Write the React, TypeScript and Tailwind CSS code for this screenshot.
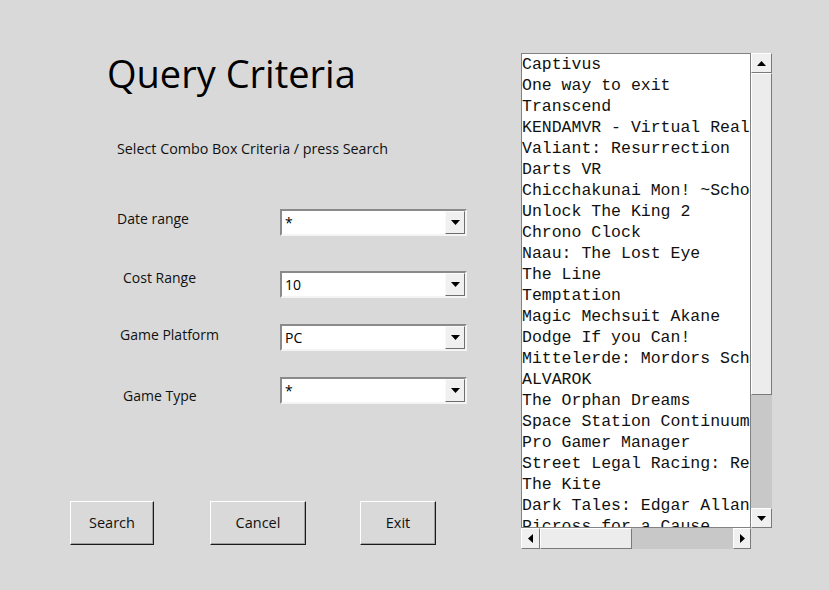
import React from "react";

const games = [
  "Captivus",
  "One way to exit",
  "Transcend",
  "KENDAMVR - Virtual Reality Kendama",
  "Valiant: Resurrection",
  "Darts VR",
  "Chicchakunai Mon! ~School Days~",
  "Unlock The King 2",
  "Chrono Clock",
  "Naau: The Lost Eye",
  "The Line",
  "Temptation",
  "Magic Mechsuit Akane",
  "Dodge If you Can!",
  "Mittelerde: Mordors Schatten",
  "ALVAROK",
  "The Orphan Dreams",
  "Space Station Continuum",
  "Pro Gamer Manager",
  "Street Legal Racing: Redline",
  "The Kite",
  "Dark Tales: Edgar Allan Poe's The Black Cat",
  "Picross for a Cause",
];

const uiFont = { fontFamily: "'Open Sans', 'Noto Sans', sans-serif" };

function Arrow({ dir }: { dir: "up" | "down" | "left" | "right" }) {
  const pts = {
    up: "0,5 4.5,0 9,5",
    down: "0,0 9,0 4.5,5",
    left: "5,0 5,9 0,4.5",
    right: "0,0 5,4.5 0,9",
  }[dir];
  const vert = dir === "up" || dir === "down";
  return (
    <svg width={vert ? 9 : 5} height={vert ? 5 : 9} viewBox={vert ? "0 0 9 5" : "0 0 5 9"}>
      <polygon points={pts} fill="#000" />
    </svg>
  );
}

function ScrollBtn({ dir, className }: { dir: "up" | "down" | "left" | "right"; className: string }) {
  return (
    <div
      className={`flex items-center justify-center bg-[#f0f0f0] border border-t-white border-l-white border-r-[#7a7a7a] border-b-[#7a7a7a] ${className}`}
    >
      <Arrow dir={dir} />
    </div>
  );
}

function Combo({ value }: { value: string }) {
  return (
    <div className="flex w-[187px] h-[27px] bg-white border-2 border-t-[#8a8a8a] border-l-[#8a8a8a] border-r-[#f4f4f4] border-b-[#f4f4f4]">
      <div className="flex-1 flex items-center pl-[3px] text-[14px] text-black" style={uiFont}>
        {value}
      </div>
      <div className="w-[20px] flex items-center justify-center bg-[#f0f0f0] border border-t-[#fafafa] border-l-[#fafafa] border-r-[#6e6e6e] border-b-[#6e6e6e]">
        <Arrow dir="down" />
      </div>
    </div>
  );
}

function Btn({ label, w }: { label: string; w: string }) {
  return (
    <div
      className={`${w} h-[44px] flex items-center justify-center text-[14.5px] text-[#111] bg-[#d9d9d9] border border-t-white border-l-white border-r-[#1a1a1a] border-b-[#1a1a1a] shadow-[inset_-1px_-1px_0_#a0a0a0]`}
      style={uiFont}
    >
      {label}
    </div>
  );
}

export default function App() {
  return (
    <div className="w-[829px] h-[590px] bg-[#d9d9d9] flex items-start overflow-hidden">
      {/* left: query form */}
      <div className="w-[521px] flex flex-col">
        <div className="pt-[50px] pl-[107px] text-[38px] leading-[46px] text-black" style={uiFont}>
          Query Criteria
        </div>
        <div className="mt-[43px] pl-[117px] text-[14.3px] leading-[20px] text-[#111]" style={uiFont}>
          Select Combo Box Criteria / press Search
        </div>

        <div className="mt-[50px] flex items-start">
          <div className="w-[280px] pl-[117px] text-[14px] leading-[20px] text-[#111]" style={uiFont}>Date range</div>
          <Combo value="*" />
        </div>
        <div className="mt-[32px] flex items-start">
          <div className="w-[280px] pl-[123px] text-[14px] leading-[20px] text-[#111]" style={uiFont}>Cost Range</div>
          <div className="mt-[3px]">
            <Combo value="10" />
          </div>
        </div>
        <div className="mt-[26px] flex items-start">
          <div className="w-[280px] pl-[120px] mt-[1px] text-[14px] leading-[20px] text-[#111]" style={uiFont}>Game Platform</div>
          <Combo value="PC" />
        </div>
        <div className="mt-[26px] flex items-start">
          <div className="w-[280px] pl-[123px] mt-[9px] text-[14px] leading-[20px] text-[#111]" style={uiFont}>Game Type</div>
          <Combo value="*" />
        </div>

        <div className="mt-[95px] pl-[70px] flex">
          <Btn label="Search" w="w-[84px]" />
          <div className="w-[56px]" />
          <Btn label="Cancel" w="w-[96px]" />
          <div className="w-[54px]" />
          <Btn label="Exit" w="w-[76px]" />
        </div>
      </div>

      {/* right: results list */}
      <div className="mt-[53px] flex flex-col">
        <div className="flex">
          <div
            className="w-[230px] h-[475px] bg-white border border-[#828282] overflow-hidden text-[16.5px] leading-[21px] text-[#111] whitespace-nowrap"
            style={{ fontFamily: "'Liberation Mono', 'Courier New', monospace" }}
          >
            {games.map((g) => (
              <div key={g}>{g}</div>
            ))}
          </div>
          <div className="w-[21px] h-[475px] flex flex-col bg-[#c8c8c8]">
            <ScrollBtn dir="up" className="h-[20px]" />
            <div className="h-[322px] bg-[#ececec] border border-t-white border-l-white border-r-[#7a7a7a] border-b-[#7a7a7a]" />
            <div className="flex-1" />
            <ScrollBtn dir="down" className="h-[20px]" />
          </div>
        </div>
        <div className="flex">
          <div className="w-[230px] h-[21px] flex bg-[#c8c8c8]">
            <ScrollBtn dir="left" className="w-[19px]" />
            <div className="w-[92px] bg-[#ececec] border border-t-white border-l-white border-r-[#7a7a7a] border-b-[#7a7a7a]" />
            <div className="flex-1" />
            <ScrollBtn dir="right" className="w-[18px]" />
          </div>
        </div>
      </div>
    </div>
  );
}
